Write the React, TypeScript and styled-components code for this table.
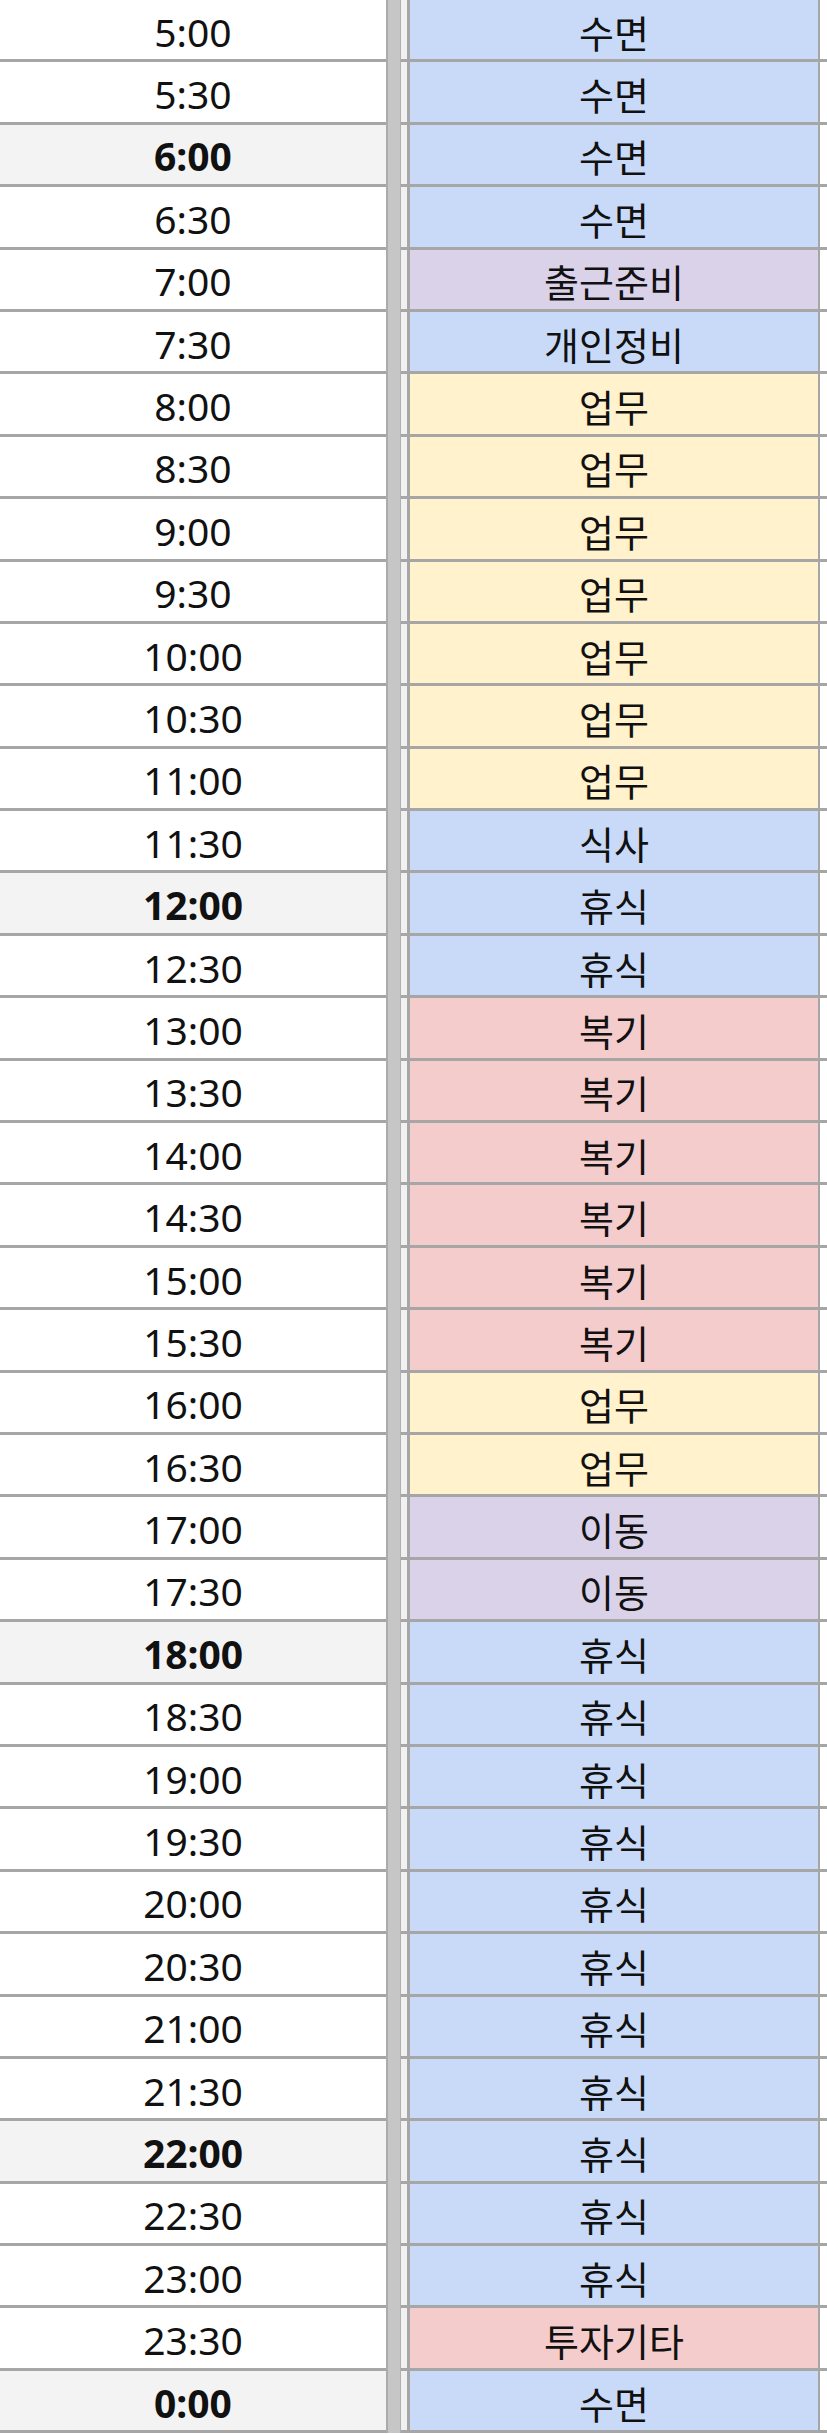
import React from "react";
import styled, { createGlobalStyle } from "styled-components";

const GlobalStyle = createGlobalStyle`
  html, body { margin: 0; padding: 0; background: #ffffff; }
  body { font-family: "Noto Sans", "Noto Sans CJK KR", sans-serif; }
`;

type Kind = "blue" | "yellow" | "purple" | "red";

const palette: Record<Kind, string> = {
  blue: "#c9daf8",
  yellow: "#fff2cc",
  purple: "#d9d2e9",
  red: "#f4cccc",
};

const LINE = "#a6a6a6";

const Sheet = styled.div`
  width: 827px;
  display: flex;
  flex-direction: column;
  overflow: hidden;
`;

const Row = styled.div`
  display: flex;
  height: 62.4px;
`;

const TimeCell = styled.div<{ $bold: boolean }>`
  width: 386px;
  box-sizing: border-box;
  border-bottom: 3px solid ${LINE};
  background: ${(p) => (p.$bold ? "#f3f3f3" : "#ffffff")};
  display: flex;
  align-items: center;
  justify-content: center;
  padding-top: 3px;
  font-family: "Noto Sans", "Noto Sans CJK KR", sans-serif;
  font-size: 39px;
  font-weight: ${(p) => (p.$bold ? 700 : 400)};
  color: #111111;
`;

const FreezeBar = styled.div`
  width: 15px;
  box-sizing: border-box;
  background: #c6c6c6;
  border-left: 2px solid #ababab;
  border-right: 1px solid #b0b0b0;
`;

const Strip = styled.div`
  width: 6px;
  box-sizing: border-box;
  background: #f1f1f1;
  border-bottom: 3px solid ${LINE};
`;

const ActivityCell = styled.div<{ $kind: Kind }>`
  flex: 0 0 413px;
  box-sizing: border-box;
  background: ${(p) => palette[p.$kind]};
  border-left: 3px solid ${LINE};
  border-right: 2px solid ${LINE};
  border-bottom: 3px solid ${LINE};
  display: flex;
  align-items: center;
  justify-content: center;
  padding-top: 3px;
  font-family: "Noto Sans CJK KR", "Noto Sans", sans-serif;
  font-size: 38px;
  color: #111111;
`;

const Tail = styled.div`
  flex: 1;
  box-sizing: border-box;
  background: #ffffff;
  border-bottom: 3px solid ${LINE};
`;

type Entry = { time: string; label: string; kind: Kind };

const entries: Entry[] = [
  { time: "5:00", label: "수면", kind: "blue" },
  { time: "5:30", label: "수면", kind: "blue" },
  { time: "6:00", label: "수면", kind: "blue" },
  { time: "6:30", label: "수면", kind: "blue" },
  { time: "7:00", label: "출근준비", kind: "purple" },
  { time: "7:30", label: "개인정비", kind: "blue" },
  { time: "8:00", label: "업무", kind: "yellow" },
  { time: "8:30", label: "업무", kind: "yellow" },
  { time: "9:00", label: "업무", kind: "yellow" },
  { time: "9:30", label: "업무", kind: "yellow" },
  { time: "10:00", label: "업무", kind: "yellow" },
  { time: "10:30", label: "업무", kind: "yellow" },
  { time: "11:00", label: "업무", kind: "yellow" },
  { time: "11:30", label: "식사", kind: "blue" },
  { time: "12:00", label: "휴식", kind: "blue" },
  { time: "12:30", label: "휴식", kind: "blue" },
  { time: "13:00", label: "복기", kind: "red" },
  { time: "13:30", label: "복기", kind: "red" },
  { time: "14:00", label: "복기", kind: "red" },
  { time: "14:30", label: "복기", kind: "red" },
  { time: "15:00", label: "복기", kind: "red" },
  { time: "15:30", label: "복기", kind: "red" },
  { time: "16:00", label: "업무", kind: "yellow" },
  { time: "16:30", label: "업무", kind: "yellow" },
  { time: "17:00", label: "이동", kind: "purple" },
  { time: "17:30", label: "이동", kind: "purple" },
  { time: "18:00", label: "휴식", kind: "blue" },
  { time: "18:30", label: "휴식", kind: "blue" },
  { time: "19:00", label: "휴식", kind: "blue" },
  { time: "19:30", label: "휴식", kind: "blue" },
  { time: "20:00", label: "휴식", kind: "blue" },
  { time: "20:30", label: "휴식", kind: "blue" },
  { time: "21:00", label: "휴식", kind: "blue" },
  { time: "21:30", label: "휴식", kind: "blue" },
  { time: "22:00", label: "휴식", kind: "blue" },
  { time: "22:30", label: "휴식", kind: "blue" },
  { time: "23:00", label: "휴식", kind: "blue" },
  { time: "23:30", label: "투자기타", kind: "red" },
  { time: "0:00", label: "수면", kind: "blue" },
];

const boldTimes = new Set(["6:00", "12:00", "18:00", "22:00", "0:00"]);

export default function App() {
  return (
    <>
      <GlobalStyle />
      <Sheet>
        {entries.map((e) => (
          <Row key={e.time}>
            <TimeCell $bold={boldTimes.has(e.time)}>{e.time}</TimeCell>
            <FreezeBar />
            <Strip />
            <ActivityCell $kind={e.kind}>{e.label}</ActivityCell>
            <Tail />
          </Row>
        ))}
      </Sheet>
    </>
  );
}
